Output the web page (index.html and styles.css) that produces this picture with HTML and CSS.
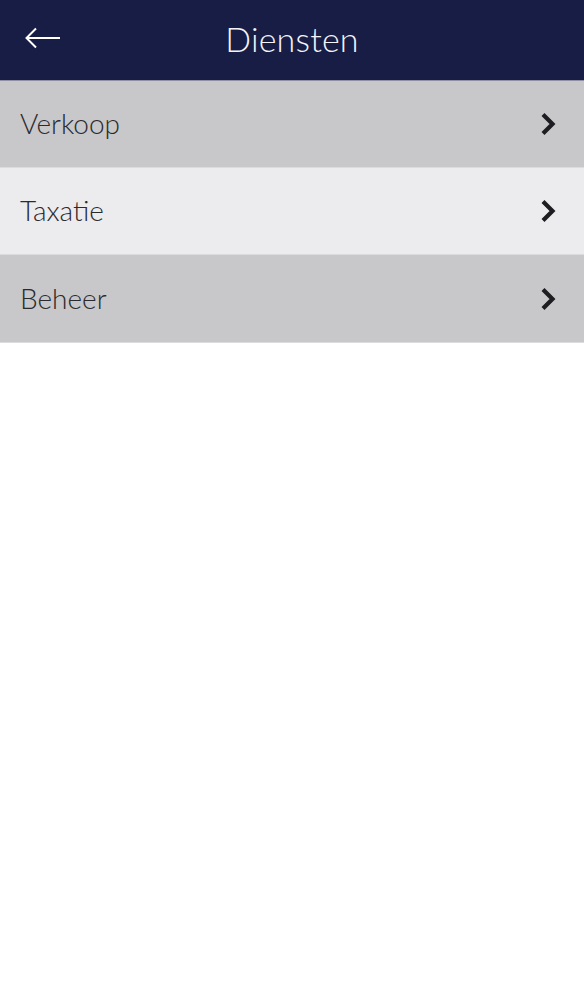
FILE: index.html
```html
<!DOCTYPE html>
<html lang="nl">
<head>
<meta charset="utf-8">
<title>Diensten</title>
<link rel="stylesheet" href="styles.css">
</head>
<body>
<header class="topbar">
  <button class="back" aria-label="Terug">
    <svg width="36" height="22" viewBox="0 0 36 22"><path d="M35 11H2M11 1.5L1.5 11L11 20.5" fill="none" stroke="#fff" stroke-width="2"/></svg>
  </button>
  <h1 class="title">Diensten</h1>
</header>
<ul class="list">
  <li class="item item-dark"><span class="label">Verkoop</span><svg class="chev" width="16" height="24" viewBox="0 0 16 24"><path d="M3 2.5L12.5 12L3 21.5" fill="none" stroke="#1e1e22" stroke-width="4.2"/></svg></li>
  <li class="item item-light"><span class="label">Taxatie</span><svg class="chev" width="16" height="24" viewBox="0 0 16 24"><path d="M3 2.5L12.5 12L3 21.5" fill="none" stroke="#1e1e22" stroke-width="4.2"/></svg></li>
  <li class="item item-dark"><span class="label">Beheer</span><svg class="chev" width="16" height="24" viewBox="0 0 16 24"><path d="M3 2.5L12.5 12L3 21.5" fill="none" stroke="#1e1e22" stroke-width="4.2"/></svg></li>
</ul>
</body>
</html>
```
FILE: styles.css
```css
* { box-sizing: border-box; }
html, body { margin: 0; padding: 0; background: #fff; }
body { font-family: Lato, "Open Sans", sans-serif; }
.topbar {
  height: 81px;
  background: #181d45;
  border-bottom: 1px solid #8f90a2;
  display: flex;
  align-items: center;
  position: relative;
}
.back {
  background: none;
  border: 0;
  padding: 0;
  margin: 0 0 5px 25px;
  display: flex;
}
.title {
  position: absolute;
  left: 0; right: 0; top: 0;
  margin: 0;
  text-align: center;
  line-height: 78px;
  color: #f4f4f8;
  font-weight: 300;
  font-size: 34px;
  letter-spacing: 0.2px;
  pointer-events: none;
}
.list { list-style: none; margin: 0; padding: 0; }
.item {
  height: 87px;
  display: flex;
  align-items: center;
  justify-content: space-between;
  padding: 0 28px 0 20px;
  border-bottom: 1px solid #dcdcde;
}
.item:last-child { height: 88px; }
.item-dark { background: #c8c7c9; }
.item-light { background: #ecebed; }
.label {
  font-size: 28px;
  font-weight: 300;
  color: #2a2a2e;
  margin-bottom: 2px;
}
.chev { display: block; }
```
